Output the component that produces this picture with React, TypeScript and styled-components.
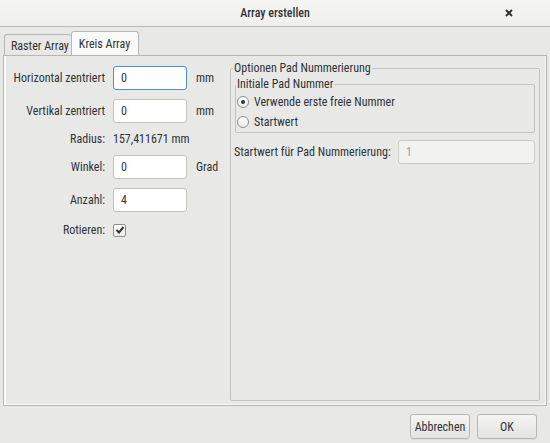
import React from "react";
import styled, { createGlobalStyle, css } from "styled-components";

const Global = createGlobalStyle`
  html, body { margin: 0; padding: 0; height: 100%; }
  body {
    background: #e8e8e7;
    font-family: "Roboto Condensed", "Liberation Sans Narrow", sans-serif;
    font-size: 12px;
    line-height: 14px;
    color: #2e3436;
  }
  #root { height: 100%; }
  * { box-sizing: border-box; }
`;

const Window = styled.div`
  width: 550px;
  height: 443px;
  display: flex;
  flex-direction: column;
  background: #e8e8e7;
`;

const TitleBar = styled.div`
  height: 27px;
  flex: none;
  display: flex;
  align-items: center;
  justify-content: center;
  position: relative;
  background: linear-gradient(#f5f5f4, #efefee);
  border-bottom: 1px solid #b8b8b5;
`;

const Title = styled.div`
  font-weight: 500;
  font-size: 12px;
  color: #2e3436;
`;

const CloseButton = styled.div`
  position: absolute;
  right: 37px;
  top: 9px;
  width: 8px;
  height: 8px;
  display: flex;
`;

const Body = styled.div`
  flex: 1;
  display: flex;
  flex-direction: column;
  padding: 4px 3px 0 3px;
`;

const Notebook = styled.div`
  display: flex;
  flex-direction: column;
  height: 375px;
`;

const TabStrip = styled.div`
  display: flex;
  align-items: flex-end;
  height: 24px;
  padding-left: 1px;
`;

const Tab = styled.div<{ $active?: boolean }>`
  border: 1px solid #b6b6b3;
  border-bottom: none;
  border-radius: 3px 3px 0 0;
  display: flex;
  align-items: center;
  color: #2e3436;
  white-space: nowrap;
  ${(p) =>
    p.$active
      ? css`
          height: 24px;
          background: #fafaf9;
          padding: 0 8px 0 7px;
        `
      : css`
          height: 21px;
          background: #e8e8e7;
          border-right: none;
          padding: 1px 2px 0 6px;
        `}
`;

const Page = styled.div`
  flex: 1;
  border: 1px solid #b6b6b3;
  box-shadow: inset 2px 0 0 #fafaf9, inset 0 -1px 0 #fafaf9, inset -1px 0 0 #fafaf9;
  display: flex;
  padding: 6px 6px 4px 3px;
  gap: 4px;
`;

const LeftForm = styled.div`
  display: grid;
  grid-template-columns: 98px 74px auto;
  column-gap: 8px;
  row-gap: 9px;
  align-items: center;
  align-content: start;
  width: 219px;
  padding-top: 4px;
`;

const Label = styled.div`
  text-align: right;
  white-space: nowrap;
  color: #2e3436;
`;

const Unit = styled.div`
  padding-left: 1px;
`;

const ValueText = styled.div`
  grid-column: 2 / span 2;
  white-space: nowrap;
  height: 14px;
`;

const Input = styled.div<{ $focused?: boolean; $disabled?: boolean }>`
  height: 24px;
  border: 1px solid ${(p) => (p.$focused ? "#4a90d9" : p.$disabled ? "#cbcbc8" : "#c2c2bf")};
  border-radius: 3px;
  background: ${(p) => (p.$disabled ? "#f2f2f1" : "#ffffff")};
  color: ${(p) => (p.$disabled ? "#9c9d9b" : "#2e3436")};
  display: flex;
  align-items: center;
  padding-left: 7px;
`;

const CheckRow = styled.div`
  height: 18px;
  display: flex;
  align-items: center;
`;

const CheckBox = styled.div`
  width: 13px;
  height: 13px;
  border: 1px solid #8e908d;
  border-radius: 2px;
  background: linear-gradient(#ffffff, #ececeb);
  display: flex;
  align-items: center;
  justify-content: center;
`;

const Frame = styled.fieldset`
  flex: 1;
  margin: 0;
  border: 1px solid #c3c3c0;
  border-radius: 2px;
  padding: 0 3px;
  display: flex;
  flex-direction: column;
  min-width: 0;
`;

const Legend = styled.legend`
  padding: 0 1px;
  margin-left: -1px;
  color: #2e3436;
  line-height: 12px;
`;

const InnerFrame = styled(Frame)`
  flex: none;
  margin: 4px 1px 0 1px;
  padding: 2px 1px 0 1px;
`;

const RadioRow = styled.div`
  height: 20px;
  display: flex;
  align-items: center;
  gap: 5px;
`;

const Radio = styled.div<{ $checked?: boolean }>`
  width: 12px;
  height: 12px;
  border-radius: 50%;
  border: 1px solid #8e908d;
  background: linear-gradient(#ffffff, #ececeb);
  display: flex;
  align-items: center;
  justify-content: center;
  &::after {
    content: "";
    width: 4px;
    height: 4px;
    border-radius: 50%;
    background: ${(p) => (p.$checked ? "#2e3436" : "transparent")};
  }
`;

const FieldRow = styled.div`
  display: flex;
  align-items: center;
  justify-content: space-between;
  margin-top: 7px;
  padding-right: 1px;
`;

const StartInput = styled(Input)`
  width: 137px;
`;

const ButtonRow = styled.div`
  display: flex;
  justify-content: flex-end;
  gap: 7px;
  padding: 8px 10px 0 0;
`;

const Button = styled.div`
  width: 60px;
  height: 25px;
  border: 1px solid #b6b6b3;
  border-radius: 3px;
  background: linear-gradient(#f4f4f3, #e3e3e1);
  display: flex;
  align-items: center;
  justify-content: center;
  color: #2e3436;
  box-shadow: 0 1px 0 rgba(0, 0, 0, 0.05);
`;

export default function App() {
  return (
    <>
      <Global />
      <Window>
        <TitleBar>
          <Title>Array erstellen</Title>
          <CloseButton>
            <svg width="8" height="8" viewBox="0 0 8 8">
              <path d="M1 1L7 7M7 1L1 7" stroke="#2e3436" strokeWidth="2" />
            </svg>
          </CloseButton>
        </TitleBar>
        <Body>
          <Notebook>
            <TabStrip>
              <Tab>Raster Array</Tab>
              <Tab $active>Kreis Array</Tab>
            </TabStrip>
            <Page>
              <LeftForm>
                <Label>Horizontal zentriert</Label>
                <Input $focused>0</Input>
                <Unit>mm</Unit>
                <Label>Vertikal zentriert</Label>
                <Input>0</Input>
                <Unit>mm</Unit>
                <Label>Radius:</Label>
                <ValueText>157,411671 mm</ValueText>
                <Label>Winkel:</Label>
                <Input>0</Input>
                <Unit>Grad</Unit>
                <Label>Anzahl:</Label>
                <Input>4</Input>
                <div />
                <Label>Rotieren:</Label>
                <CheckRow>
                  <CheckBox>
                    <svg width="10" height="10" viewBox="0 0 10 10">
                      <path d="M1.5 5L4 7.5L8.5 2" fill="none" stroke="#2e3436" strokeWidth="2" />
                    </svg>
                  </CheckBox>
                </CheckRow>
                <div />
              </LeftForm>
              <Frame>
                <Legend>Optionen Pad Nummerierung</Legend>
                <InnerFrame>
                  <Legend>Initiale Pad Nummer</Legend>
                  <RadioRow>
                    <Radio $checked />
                    <span>Verwende erste freie Nummer</span>
                  </RadioRow>
                  <RadioRow>
                    <Radio />
                    <span>Startwert</span>
                  </RadioRow>
                </InnerFrame>
                <FieldRow>
                  <span>Startwert für Pad Nummerierung:</span>
                  <StartInput $disabled>1</StartInput>
                </FieldRow>
              </Frame>
            </Page>
          </Notebook>
          <ButtonRow>
            <Button>Abbrechen</Button>
            <Button>OK</Button>
          </ButtonRow>
        </Body>
      </Window>
    </>
  );
}
